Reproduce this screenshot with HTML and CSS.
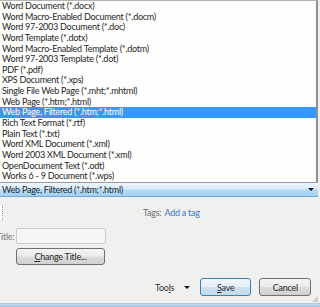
FILE: index.html
```html
<!DOCTYPE html>
<html lang="en">

<head>
    <meta charset="UTF-8">
    <meta name="viewport" content="width=device-width, initial-scale=1.0">
    <link rel="stylesheet" href="styles.css">
    <title>Save As</title>
</head>

<body>
    <div class="list">
        <div class="item">Word Document (*.docx)</div>
        <div class="item">Word Macro-Enabled Document (*.docm)</div>
        <div class="item">Word 97-2003 Document (*.doc)</div>
        <div class="item">Word Template (*.dotx)</div>
        <div class="item">Word Macro-Enabled Template (*.dotm)</div>
        <div class="item">Word 97-2003 Template (*.dot)</div>
        <div class="item">PDF (*.pdf)</div>
        <div class="item">XPS Document (*.xps)</div>
        <div class="item">Single File Web Page (*.mht;*.mhtml)</div>
        <div class="item">Web Page (*.htm;*.html)</div>
        <div class="item selected">Web Page, Filtered (*.htm;*.html)</div>
        <div class="item">Rich Text Format (*.rtf)</div>
        <div class="item">Plain Text (*.txt)</div>
        <div class="item">Word XML Document (*.xml)</div>
        <div class="item">Word 2003 XML Document (*.xml)</div>
        <div class="item">OpenDocument Text (*.odt)</div>
        <div class="item">Works 6 - 9 Document (*.wps)</div>
    </div>

    <div class="combo">
        <span>Web Page, Filtered (*.htm;*.html)</span>
        <span class="arrow"></span>
    </div>

    <div class="details">
        <div class="meta">
            <div class="stub"></div>
            <div class="tags"><span class="label">Tags:</span> <span class="link">Add a tag</span></div>
        </div>
        <div class="title-row">
            <span class="title-label">Title:</span>
            <div class="field"></div>
        </div>
        <div class="change-row">
            <div class="btn change"><span><u>C</u>hange Title...</span></div>
        </div>
        <div class="footer">
            <div class="tools"><span>Too<u>l</u>s</span><span class="arrow"></span></div>
            <div class="btn save"><span><u>S</u>ave</span></div>
            <div class="btn cancel"><span>Cancel</span></div>
            <div class="grip"></div>
        </div>
    </div>

    <div class="taskbar"></div>
</body>

</html>
```

FILE: styles.css
```css
* {
    margin: 0;
    padding: 0;
    box-sizing: border-box;
}

body {
    width: 320px;
    height: 307px;
    overflow: hidden;
    background: #f0f0ee;
    font-family: Lato, "Liberation Sans", sans-serif;
    font-size: 9px;
    letter-spacing: -0.25px;
    color: #262626;
}

.list {
    width: 318px;
    height: 182px;
    background: #fefefd;
    border-top: 1px solid #b4b4b4;
    border-right: 2px solid #8e8e94;
}

.item {
    height: 10.65px;
    line-height: 10.65px;
    padding-left: 2px;
    white-space: nowrap;
}

.item.selected {
    background: #3399ff;
    color: #fff;
}

.combo {
    width: 318px;
    height: 15px;
    display: flex;
    align-items: center;
    justify-content: space-between;
    padding: 0 4px 0 2px;
    border-top: 1px solid #9a9aa0;
    border-bottom: 1px solid #6fa8d6;
    background: linear-gradient(#eef7fe, #d6ebfb 45%, #b4dbf6 55%, #a2d1f2);
}

.arrow {
    width: 0;
    height: 0;
    border-left: 3px solid transparent;
    border-right: 3px solid transparent;
    border-top: 3px solid #111;
}

.details {
    height: 106px;
    position: relative;
}

.meta {
    display: flex;
    align-items: center;
    padding-top: 8px;
    height: 23px;
}

.stub {
    width: 3px;
    height: 15px;
    background: #fff;
    border-right: 1px dotted #9a9a9a;
}

.tags {
    margin-left: 140px;
    color: #6e6e6e;
}

.tags .link {
    color: #3b78c6;
    margin-left: 1px;
}

.title-row {
    display: flex;
    align-items: center;
    margin-top: 8px;
    height: 16px;
}

.title-label {
    width: 16px;
    margin-left: -4px;
    color: #7a7a7a;
}

.field {
    width: 90px;
    height: 16px;
    margin-left: 4px;
    background: #f6f6f5;
    border: 1px solid #cdcdcd;
    border-radius: 2px;
}

.change-row {
    padding-left: 16px;
    margin-top: 4px;
}

.btn {
    display: flex;
    align-items: center;
    justify-content: center;
    border: 1px solid #707070;
    border-radius: 3px;
    background: linear-gradient(#f4f4f4, #ebebeb 48%, #dcdcdc 52%, #d0d0d0);
    color: #2a2a2a;
}

.change {
    width: 89px;
    height: 17px;
}

.footer {
    display: flex;
    align-items: center;
    margin-top: 13px;
    height: 18px;
}

.tools {
    margin-left: 155px;
    display: flex;
    align-items: center;
    gap: 10px;
    color: #333;
}

.save {
    margin-left: 10px;
    width: 51px;
    height: 18px;
    border-color: #3c7fb1;
    background: linear-gradient(#f1f7fc, #e4eff8 48%, #cde2f2 52%, #c3dbee);
}

.cancel {
    margin-left: 8px;
    width: 52px;
    height: 18px;
}

.grip {
    position: absolute;
    right: 2px;
    bottom: 1px;
    width: 6px;
    height: 6px;
    background: radial-gradient(circle, #a8a8a8 0.6px, transparent 0.8px) 0 0 / 2px 2px;
    clip-path: polygon(100% 0, 100% 100%, 0 100%);
}

.taskbar {
    height: 4px;
    border-top: 1px solid #b8c4d0;
    background: linear-gradient(#c8dcee, #9fc1e0);
}
```
